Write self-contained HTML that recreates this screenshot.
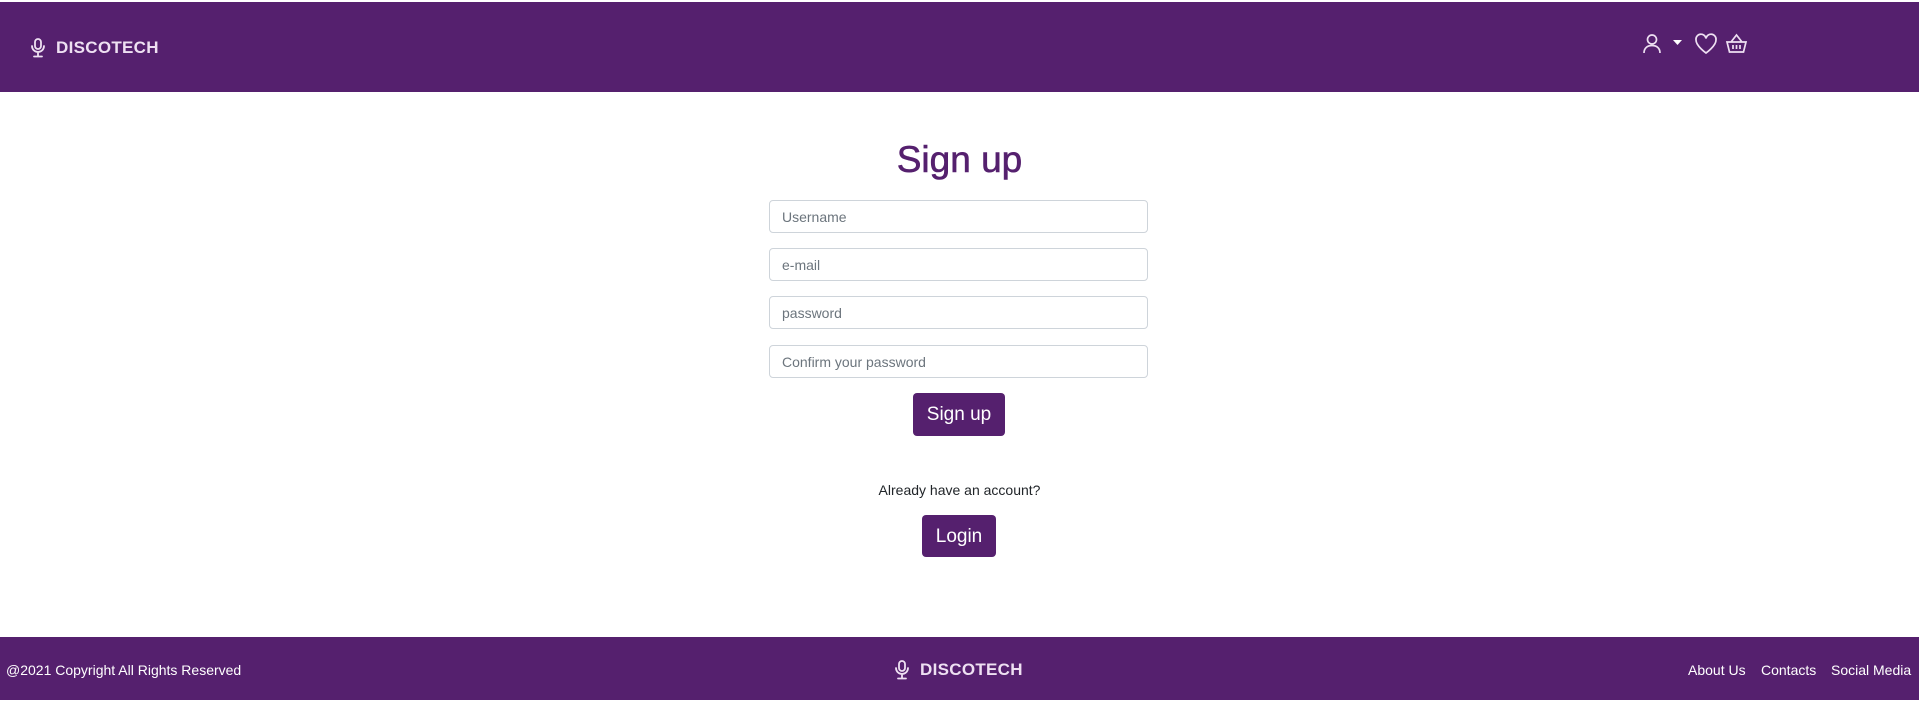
<!DOCTYPE html>
<html><head><meta charset="utf-8"><style>
*{box-sizing:border-box;margin:0;padding:0}
body{width:1919px;height:703px;background:#fff;font-family:"Liberation Sans",sans-serif;position:relative;overflow:hidden}
.hdr{position:absolute;left:0;top:2px;width:1919px;height:90px;background:#55206e}
.ftr{position:absolute;left:0;top:637px;width:1919px;height:63px;background:#55206e;color:#fff;font-size:14px}
.logo{position:absolute;color:#eee0f2;font-weight:bold;font-size:17px;letter-spacing:0.3px}
.abs{position:absolute}
h1{position:absolute;left:0;width:1919px;text-align:center;top:139px;font-size:37px;font-weight:normal;color:#55206e;-webkit-text-stroke:0.6px #55206e}
.in{position:absolute;left:769px;width:379px;height:33px;border:1px solid #ced4da;border-radius:4px;color:#6c757d;font-size:14px;padding-left:12px;line-height:33px}
.btn{position:absolute;background:#55206e;color:#fff;border-radius:4px;text-align:center;font-size:19px}
</style></head><body>
<div class="hdr">
 <svg class="abs" style="left:29px;top:36px" width="18" height="20" viewBox="0 0 18 20" fill="none" stroke="#eee0f2" stroke-width="1.8" stroke-linecap="round"><rect x="6" y="1" width="6" height="10" rx="3"/><path d="M3 8a6 6 0 0 0 12 0M9 14v4M5 18.5h8"/></svg>
 <div class="logo" style="left:56px;top:36px">DISCOTECH</div>
 <svg class="abs" style="left:1642px;top:31px" width="20" height="22" viewBox="0 0 20 22" fill="none" stroke="#eee0f2" stroke-width="1.7"><circle cx="10" cy="6.5" r="4.5"/><path d="M2 20c0-5 3.5-7.5 8-7.5s8 2.5 8 7.5"/></svg>
 <svg class="abs" style="left:1673px;top:38px" width="9" height="6"><path d="M0 0h9L4.5 5z" fill="#fff"/></svg>
 <svg class="abs" style="left:1694px;top:31px" width="24" height="22" viewBox="0 0 24 22" fill="none" stroke="#eee0f2" stroke-width="1.7"><path d="M12 20S2 13 2 7a5 5 0 0 1 10-1.5A5 5 0 0 1 22 7c0 6-10 13-10 13z"/></svg>
 <svg class="abs" style="left:1725px;top:31px" width="23" height="22" viewBox="0 0 23 22" fill="none" stroke="#eee0f2" stroke-width="1.7"><path d="M6 9l5.5-7 5.5 7M2 9h19l-2.5 10h-14z"/><path d="M8 12v4M11.5 12v4M15 12v4"/></svg>
</div>
<h1>Sign up</h1>
<div class="in" style="top:200px">Username</div>
<div class="in" style="top:248px">e-mail</div>
<div class="in" style="top:296px">password</div>
<div class="in" style="top:345px">Confirm your password</div>
<div class="btn" style="left:913px;top:393px;width:92px;height:43px;line-height:44px">Sign up</div>
<div class="abs" style="left:0;width:1919px;text-align:center;top:482px;font-size:14px;color:#212529">Already have an account?</div>
<div class="btn" style="left:922px;top:515px;width:74px;height:42px;line-height:44px">Login</div>
<div class="ftr">
 <div class="abs" style="left:6px;top:25px">@2021 Copyright All Rights Reserved</div>
 <svg class="abs" style="left:893px;top:23px" width="18" height="20" viewBox="0 0 18 20" fill="none" stroke="#eee0f2" stroke-width="1.8" stroke-linecap="round"><rect x="6" y="1" width="6" height="10" rx="3"/><path d="M3 8a6 6 0 0 0 12 0M9 14v4M5 18.5h8"/></svg>
 <div class="logo" style="left:920px;top:23px">DISCOTECH</div>
 <div class="abs" style="left:1688px;top:25px">About Us</div>
 <div class="abs" style="left:1761px;top:25px">Contacts</div>
 <div class="abs" style="left:1831px;top:25px">Social Media</div>
</div>
</body></html>
